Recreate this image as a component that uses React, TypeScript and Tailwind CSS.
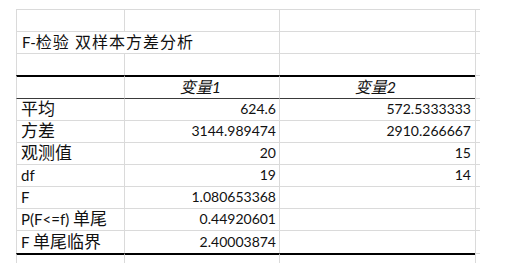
import type { ReactNode } from "react";

type Edge = "grid" | "thick" | "thin";

const rows: { edge: Edge; label?: ReactNode; a?: string; b?: string; h: string }[] = [
  { edge: "thin", label: "平均", a: "624.6", b: "572.5333333", h: "h-[22px]" },
  { edge: "grid", label: "方差", a: "3144.989474", b: "2910.266667", h: "h-[22px]" },
  { edge: "grid", label: "观测值", a: "20", b: "15", h: "h-[22px]" },
  { edge: "grid", label: <span className="text-[15px]">df</span>, a: "19", b: "14", h: "h-[22px]" },
  { edge: "grid", label: <span className="text-[15px]">F</span>, a: "1.080653368", h: "h-[22px]" },
  {
    edge: "grid",
    label: (
      <span className="text-[15px]">
        P(F&lt;=f) <span className="text-[17px]">单尾</span>
      </span>
    ),
    a: "0.44920601",
    h: "h-[22px]"
  },
  {
    edge: "grid",
    label: (
      <span className="text-[15px]">
        F <span className="text-[17px]">单尾临界</span>
      </span>
    ),
    a: "2.40003874",
    h: "h-[23px]"
  }
];

const topClass: Record<Edge, string> = {
  grid: "border-t border-t-[#dadada]",
  thick: "border-t-2 border-t-black",
  thin: "border-t border-t-[#3a3a3a]"
};

function Row({
  edge,
  h,
  children
}: {
  edge: Edge;
  h: string;
  children: [ReactNode, ReactNode, ReactNode];
}) {
  const [first, second, third] = children;
  return (
    <div className={`flex ${h}`}>
      <div className={`flex w-[108px] items-end border-l border-l-[#dadada] pb-[2px] pl-[4px] whitespace-nowrap ${topClass[edge]}`}>
        {first}
      </div>
      <div className={`flex w-[155px] items-end justify-end border-l border-l-[#dadada] pb-[2px] pr-[3px] ${topClass[edge]}`}>
        {second}
      </div>
      <div className={`flex w-[196px] items-end justify-end border-l border-l-[#dadada] pb-[2px] pr-[4px] ${topClass[edge]}`}>
        {third}
      </div>
      <div className="w-[5px] border-l border-t border-[#dadada]" />
    </div>
  );
}

export default function App() {
  return (
    <main className="h-[272px] w-[505px] overflow-hidden bg-white pl-[16px] pt-[9px] font-['Lato','Noto_Sans_CJK_SC',sans-serif] text-[14px] leading-[18px] text-[#111]">
      <Row edge="grid" h="h-[22px]">
        {[null, null, null]}
      </Row>

      {/* title overflows into the second column, so no divider there */}
      <div className="flex h-[22px]">
        <div className="flex w-[263px] items-end border-l border-t border-[#dadada] pb-[2px] pl-[5px] whitespace-nowrap">
          <span className="text-[15px]">
            F-<span className="text-[16px] tracking-[1px]">检验 双样本方差分析</span>
          </span>
        </div>
        <div className="w-[196px] border-l border-t border-[#dadada]" />
        <div className="w-[5px] border-l border-t border-[#dadada]" />
      </div>

      <Row edge="grid" h="h-[22px]">
        {[null, null, null]}
      </Row>

      <Row edge="thick" h="h-[23px]">
        {[
          null,
          <span className="mx-auto italic text-[16px]">变量1</span>,
          <span className="mx-auto italic text-[16px]">变量2</span>
        ]}
      </Row>

      {rows.map((r, i) => (
        <Row key={i} edge={r.edge} h={r.h}>
          {[
            <span className="text-[17px]">{r.label}</span>,
            r.a ? <span>{r.a}</span> : null,
            r.b ? <span>{r.b}</span> : null
          ]}
        </Row>
      ))}

      <div className="flex h-[10px]">
        <div className="w-[108px] border-l border-t-2 border-l-[#dadada] border-t-black" />
        <div className="w-[155px] border-l border-t-2 border-l-[#dadada] border-t-black" />
        <div className="w-[196px] border-l border-t-2 border-l-[#dadada] border-t-black" />
        <div className="w-[5px] border-l border-t border-[#dadada]" />
      </div>
    </main>
  );
}
